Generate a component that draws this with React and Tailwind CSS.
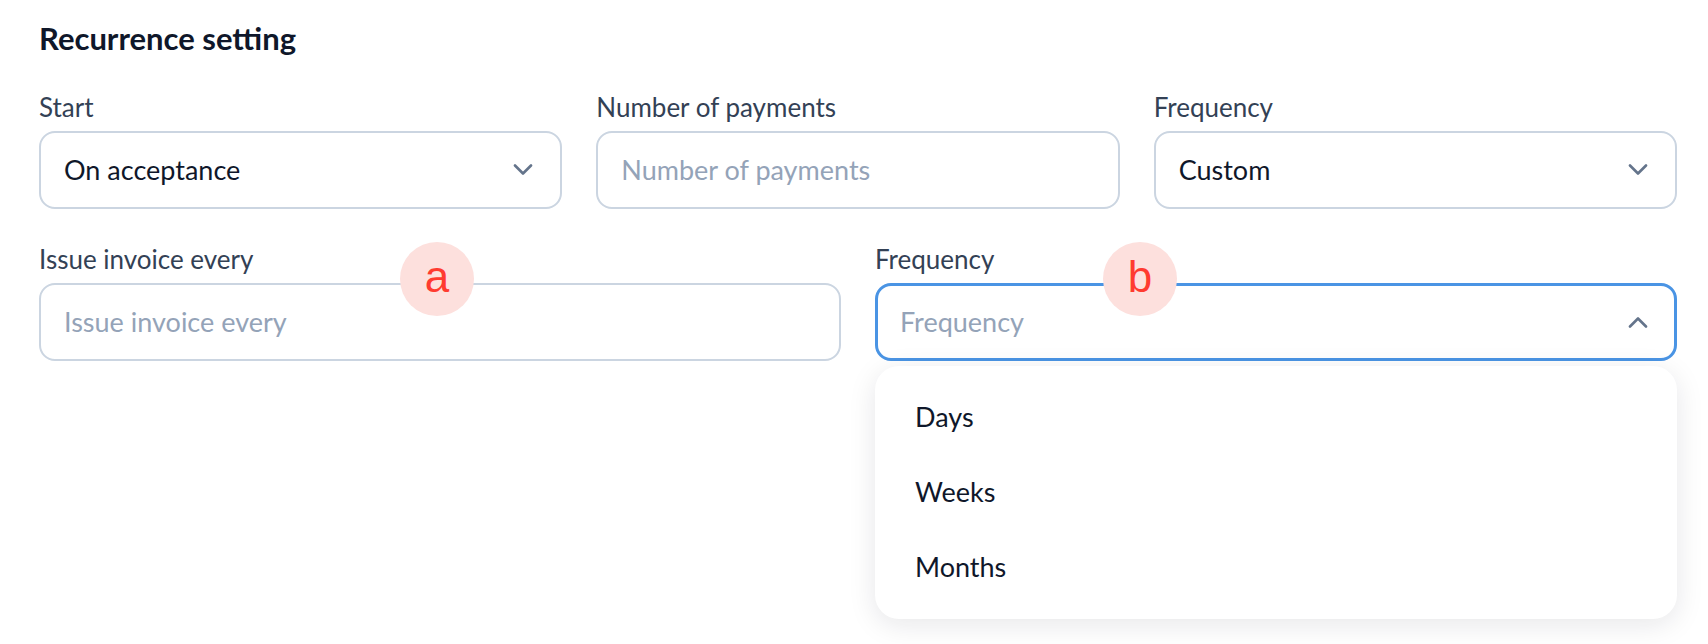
import { useState } from "react";

function Chevron({ up = false }) {
  return (
    <svg width="20" height="12" viewBox="0 0 20 12" fill="none" className="shrink-0">
      <path
        d={up ? "M2 10.5L10 2.5L18 10.5" : "M2 1.5L10 9.5L18 1.5"}
        stroke="#64748b"
        strokeWidth="2.6"
        strokeLinecap="round"
        strokeLinejoin="round"
      />
    </svg>
  );
}

function Label({ children }) {
  return <p className="text-[26px] leading-[36px] text-[#334155] mb-[6px]">{children}</p>;
}

function SelectBox({ value, placeholder }) {
  return (
    <div className="h-[78px] border-2 border-[#cbd5e1] rounded-[16px] pl-[23px] pr-[27px] flex items-center justify-between bg-white">
      <span className={value ? "text-[27px] text-[#0f172a]" : "text-[27px] text-[#94a3b8]"}>{value || placeholder}</span>
      <Chevron />
    </div>
  );
}

function TextBox({ placeholder }) {
  return (
    <div className="h-[78px] border-2 border-[#cbd5e1] rounded-[16px] pl-[23px] pr-[27px] flex items-center bg-white">
      <span className="text-[27px] text-[#94a3b8]">{placeholder}</span>
    </div>
  );
}

function Marker({ letter, className }) {
  return (
    <div
      className={
        "absolute w-[74px] h-[74px] rounded-full bg-[#fde0dd] flex items-center justify-center text-[#ff3b30] text-[44px] leading-none font-['Liberation_Sans',Arial,sans-serif] " +
        className
      }
    >
      <span className="-mt-[4px]">{letter}</span>
    </div>
  );
}

export default function App() {
  const [open] = useState(true);
  const options = ["Days", "Weeks", "Months"];

  return (
    <div className="relative w-[1708px] h-[644px] bg-white font-['Lato','Noto_Sans',sans-serif]">
      <div className="pl-[39px] pr-[31px] pt-[18px]">
        <h2 className="text-[31px] leading-[40px] font-bold text-[#0f172a]">Recurrence setting</h2>

        <div className="grid grid-cols-3 gap-x-[34px] mt-[31px]">
          <div>
            <Label>Start</Label>
            <SelectBox value="On acceptance" />
          </div>
          <div>
            <Label>Number of payments</Label>
            <TextBox placeholder="Number of payments" />
          </div>
          <div>
            <Label>Frequency</Label>
            <SelectBox value="Custom" />
          </div>
        </div>

        <div className="grid grid-cols-2 gap-x-[34px] mt-[32px]">
          <div>
            <Label>Issue invoice every</Label>
            <TextBox placeholder="Issue invoice every" />
          </div>
          <div className="relative">
            <Label>Frequency</Label>
            <div className="h-[78px] border-[3px] border-[#4a94e4] rounded-[16px] pl-[22px] pr-[26px] flex items-center justify-between bg-white">
              <span className="text-[27px] text-[#94a3b8]">Frequency</span>
              <Chevron up />
            </div>
            {open && (
              <div className="absolute left-0 right-0 top-full mt-[5px] bg-white rounded-[24px] shadow-[0_6px_28px_rgba(15,23,42,0.10)] pt-[14px] pb-[14px]">
                {options.map((o) => (
                  <div key={o} className="h-[75px] flex items-center pl-[40px] text-[27px] text-[#0f172a]">
                    {o}
                  </div>
                ))}
              </div>
            )}
          </div>
        </div>
      </div>

      <Marker letter="a" className="left-[400px] top-[242px]" />
      <Marker letter="b" className="left-[1103px] top-[242px]" />
    </div>
  );
}
